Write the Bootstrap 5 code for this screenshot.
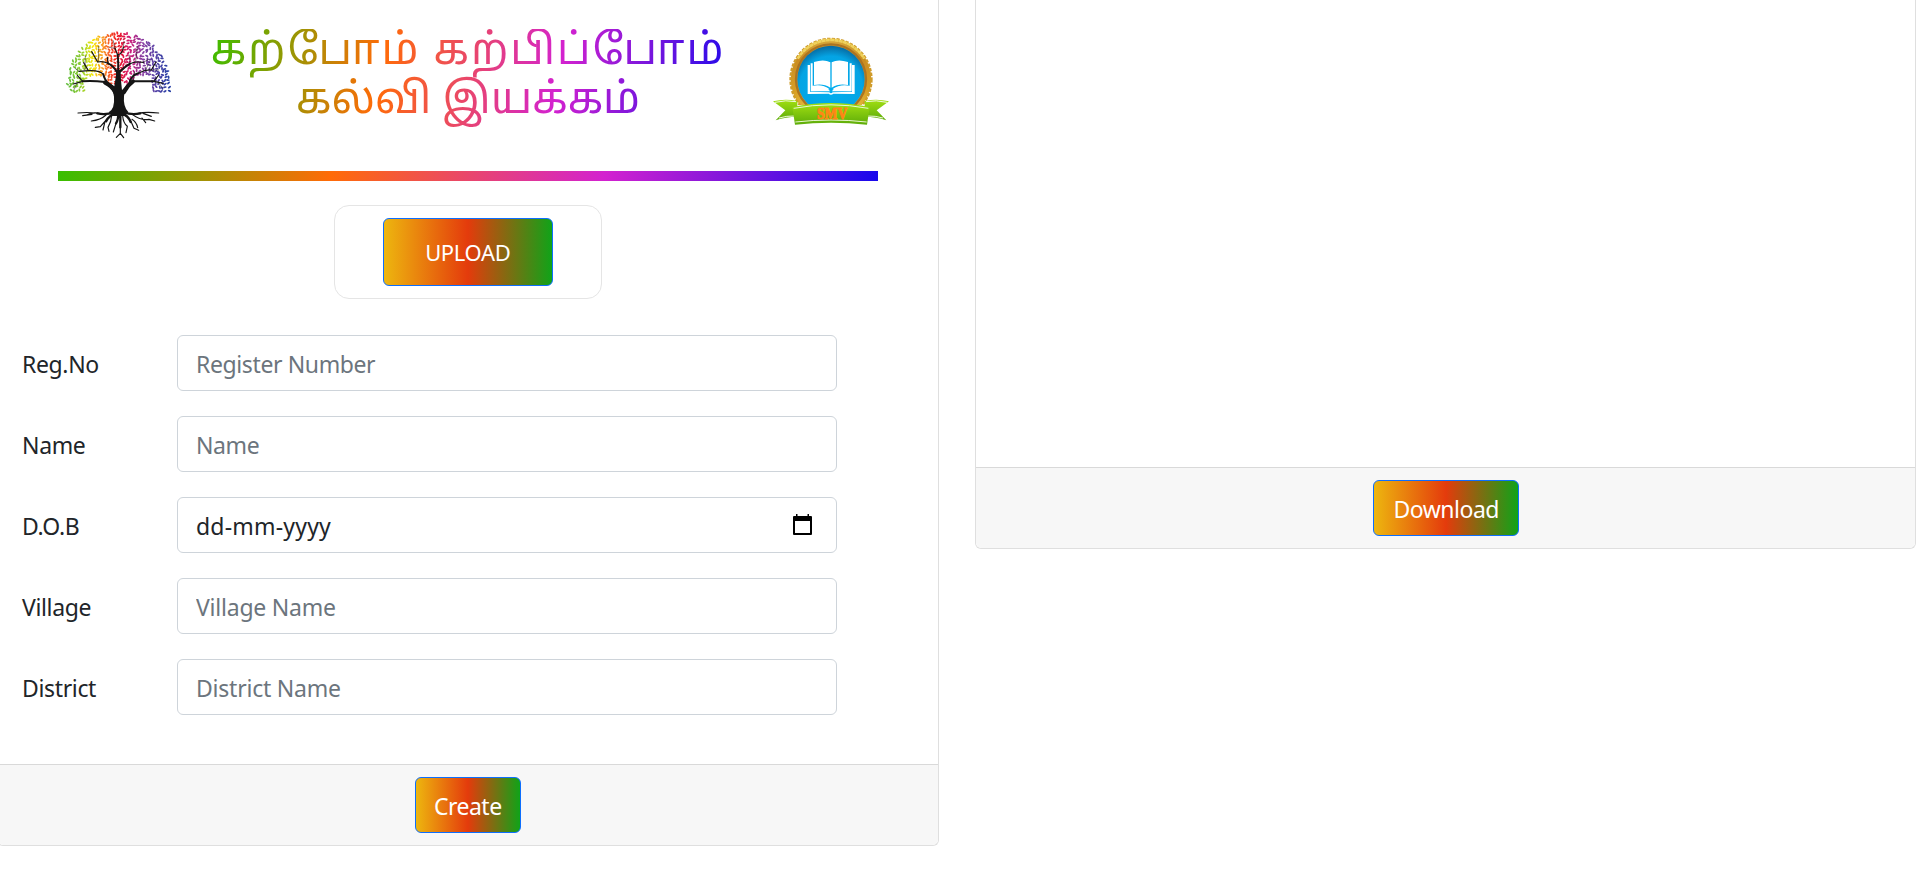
<!DOCTYPE html>
<html lang="en">
<head>
<meta charset="utf-8">
<meta name="viewport" content="width=device-width, initial-scale=1">
<title>ID card</title>
<link href="https://cdn.jsdelivr.net/npm/bootstrap@5.3.0/dist/css/bootstrap.min.css" rel="stylesheet">
<style>
html{font-size:24px}
body{font-family:"Noto Sans","Open Sans",sans-serif;font-size:23px;letter-spacing:-.35px;overflow:hidden;background:#fff;color:#212529}
.page{width:1919px;margin-left:-3px}
.card{border-color:#dfdfdf;border-top:0;border-radius:0 0 6px 6px}
.card-footer{background:#f7f7f7;border-color:#d9d9d9;height:81px;padding:12px 0;border-radius:0 0 6px 6px!important}
.form-card{height:846px}
.view-card{height:549px}
.head{height:171px;padding:20px 0 0 52px}
.tree{width:135px;height:130px}
.emblem{width:124px;height:97px;margin:13px 0 0 32px}
.title{width:540px;margin:9px 0 0 13px;padding:0 7px;font-family:"Noto Sans Tamil","Noto Sans",sans-serif;font-size:43px;line-height:50px;font-weight:400;white-space:nowrap}
.title span{display:block}
.l1{letter-spacing:2px}
.l2{letter-spacing:0;margin-top:-1px}
.rainbow{background:linear-gradient(100deg,#38bf00,#ff6b08 33.3%,#d322cf 66.6%,#1808ec)}
.title .paint{background:linear-gradient(100deg,#38bf00,#ff6b08 33.3%,#d322cf 66.6%,#1808ec);-webkit-background-clip:text;background-clip:text;color:transparent;margin:0 3px;padding-bottom:10px}
.bar{height:10px;width:820px;margin-left:60px}
.upload-box{width:268px;height:94px;margin:24px auto 36px;border:1px solid #e5e5e5;border-radius:15px;padding:12px 0 0 48px}
.btn{font-size:23px;letter-spacing:-.5px;line-height:36px;border:1px solid #0d6efd;border-radius:6px;color:#fff;padding:10px 0 8px;height:56px;background:linear-gradient(90deg,#edb60f,#e43b0c 50%,#10a318)}
.btn-up{width:170px;height:68px;font-size:22px;padding:14px 0;letter-spacing:-.35px}
.btn-create{width:106px}
.btn-down{width:146px;margin-left:2px}
.fields{padding-left:24px;gap:25px}
.fields label{width:155px;padding-top:2px}
.form-control{width:660px;height:56px;font-size:23px;letter-spacing:-.38px;padding:10px 18px 8px;border:1px solid #ced4da;border-radius:6px;color:#212529}
.form-control::placeholder{color:#6c757d;opacity:1}
#dob{letter-spacing:.2px}
#vil,#dis{letter-spacing:-.22px}
.cal{position:absolute;right:24px;top:17px;width:21px;height:22px}
</style>
</head>
<body>
<div class="page">
<div class="row">
<div class="col-6">
<div class="card form-card">
  <div class="flex-grow-1">
    <div class="head d-flex align-items-start">
      <svg class="tree flex-shrink-0" viewBox="0 0 405 390">
        <g id="leaves"></g>
        <g fill="none" stroke="#151515" stroke-linecap="round" stroke-linejoin="round">
          <path stroke-width="12" d="M203 205Q207 180 205 155M222 216Q232 196 249 184M196 218Q187 198 165 188"/>
          <path stroke-width="6" d="M204 165Q206 130 203 105M206 158Q225 140 240 131M202 158Q190 136 174 130M249 184L312 184M165 186Q130 182 98 184M238 192Q242 166 265 160M180 195Q163 180 160 163"/>
          <path stroke-width="3.500" d="M203 105L195 85M203 105Q218 100 220 82M240 131Q252 124 280 127M174 130Q160 123 143 126L125 95M174 130L172 112M265 160Q285 148 304 150L318 126M160 163Q150 150 115 152L101 128M115 152L87 154M312 184L326 165M312 184L340 190M98 184L82 166M98 184L70 192"/>
          <path stroke-width="1.500" d="M195 85L190 62M195 85L178 82M220 82L222 65M145 124L146 78M240 129L237 105M257 125L262 80M280 127L296 118M286 151L299 126M304 150L326 150M105 151L106 108M87 154L75 145M326 188L338 205M80 189L73 208M250 184L254 155"/>
          <path stroke-width="7" d="M192 276Q168 286 142 280M221 276Q244 286 271 280M194 281Q177 287 168 304M218 282Q234 286 242 306M205 280Q205 300 198 310M211 280V322"/>
          <path stroke-width="3.500" d="M150 281Q132 275 110 285M138 279Q110 276 84 279M126 283L98 287M168 285Q152 300 124 303M174 294L151 320L136 322M165 304L159 330M185 286Q184 305 174 322L177 334M198 310L190 336M211 322V340L199 352M211 340L221 353M218 288Q220 310 232 319L228 338M241 300L252 325L266 331M246 298Q260 307 263 323M248 284Q270 302 297 298L314 303M262 281Q285 274 326 279M279 280L304 289M276 294L287 308"/>
        </g>
        <path fill="#151515" d="M193 199Q197 175 200 150H211Q212 175 216 210Q227 201 235 191L246 190Q226 204 222 228Q219 260 235 276L222 288H190L176 277Q195 266 192 230Q190 207 169 193L174 187Q188 195 193 199Z"/>
      </svg>
      <h1 class="title"><span class="paint"><span class="text-center l1">கற்போம் கற்பிப்போம்</span><span class="text-center l2">கல்வி இயக்கம்</span></span></h1>
      <svg class="emblem flex-shrink-0" viewBox="30 40 372 291">
        <defs>
          <linearGradient id="gold" x1="0" y1="0" x2="0" y2="1"><stop offset="0" stop-color="#d9a93a"/><stop offset=".25" stop-color="#c98c22"/><stop offset=".65" stop-color="#d99f25"/><stop offset="1" stop-color="#e8c84d"/></linearGradient>
          <radialGradient id="sky" cx=".5" cy=".62" r=".62"><stop offset="0" stop-color="#00aef0"/><stop offset=".75" stop-color="#04a4e4"/><stop offset="1" stop-color="#08699f"/></radialGradient>
          <linearGradient id="leaf" x1="0" y1="0" x2="0" y2="1"><stop offset="0" stop-color="#a2df12"/><stop offset="1" stop-color="#5dac09"/></linearGradient>
        </defs>
        <circle cx="213" cy="179" r="121" fill="url(#gold)"/>
        <circle cx="213" cy="179" r="121.500" fill="none" stroke="#cf9c2b" stroke-width="7" stroke-dasharray="10 4"/>
        <path d="M113 117A117 117 0 0 1 313 117" fill="none" stroke="#efd25c" stroke-width="8" stroke-dasharray="12 1"/>
        <circle cx="213" cy="179" r="105" fill="none" stroke="#ad7420" stroke-width="7"/>
        <circle cx="213" cy="179" r="101" fill="url(#sky)"/>
        <path d="M110 256H316L300 310H120Z" fill="#fff"/>
        <path fill="#fff" d="M143 136H150V216L208 218Q213 224 218 218L276 216V136H284V223L220 222Q213 228 206 222L143 223Z"/>
        <path fill="#fff" d="M152 131H158V198Q188 192 209 209Q180 203 158 214H152ZM275 131H269V198Q239 192 217 209Q247 203 269 214H275Z"/>
        <path fill="#fff" d="M162 127Q192 117 211 128V204Q190 190 162 196ZM264 127Q234 117 215 128V204Q236 190 264 196Z"/>
        <path fill="#fff" d="M153 215Q164 197 184 200Q204 203 210 215ZM273 215Q262 197 242 200Q222 203 216 215Z"/>
        <path fill="url(#leaf)" d="M39 245Q75 236 112 244V291Q77 291 47 302L76 272ZM387 245Q351 236 314 244V291Q349 291 379 302L350 272Z"/>
        <path d="M45 248Q78 240 108 246M381 248Q348 240 318 246M57 295Q80 288 105 289M369 295Q346 288 321 289" fill="none" stroke="#f0fae0" stroke-width="3"/>
        <path fill="url(#leaf)" d="M97 262Q213 238 329 262L321 315Q213 303 105 315Z"/>
        <path d="M101 266Q213 245 325 266M106 307Q213 295 320 307" fill="none" stroke="#e9f7d3" stroke-width="3"/>
        <text x="171" y="297" textLength="91" lengthAdjust="spacingAndGlyphs" font-family="Liberation Serif, serif" font-weight="700" font-size="48" fill="#ff8617" stroke="#ff8617" stroke-width="3" letter-spacing="0">SMV</text>
      </svg>
    </div>
    <div class="bar rainbow"></div>
    <div class="upload-box"><button class="btn btn-up">UPLOAD</button></div>
    <div class="fields d-flex flex-column">
      <div class="d-flex align-items-center"><label for="reg">Reg.No</label><input id="reg" class="form-control" placeholder="Register Number"></div>
      <div class="d-flex align-items-center"><label for="nm">Name</label><input id="nm" class="form-control" placeholder="Name"></div>
      <div class="d-flex align-items-center"><label for="dob">D.O.B</label>
        <div class="position-relative"><input id="dob" class="form-control" value="dd-mm-yyyy">
          <svg class="cal" viewBox="0 0 21 22"><path d="M2 2H4V0H5.500V2H15.500V0H17V2H19Q20 2 20 3V20Q20 21 19 21H2Q1 21 1 20V3Q1 2 2 2ZM3 7V19H18V7Z" fill="#000" fill-rule="evenodd"/></svg></div>
      </div>
      <div class="d-flex align-items-center"><label for="vil">Village</label><input id="vil" class="form-control" placeholder="Village Name"></div>
      <div class="d-flex align-items-center"><label for="dis">District</label><input id="dis" class="form-control" placeholder="District Name"></div>
    </div>
  </div>
  <div class="card-footer text-center"><button class="btn btn-create">Create</button></div>
</div>
</div>
<div class="col-6">
<div class="card view-card">
  <div class="flex-grow-1"></div>
  <div class="card-footer text-center"><button class="btn btn-down">Download</button></div>
</div>
</div>
</div>
</div>
<script src="https://cdn.jsdelivr.net/npm/bootstrap@5.3.0/dist/js/bootstrap.bundle.min.js"></script>
<script>
// Scatter the leaves over the crown, tinted from green on the left to blue on the right
(function(){
  var stops=[[55,100,190,60],[95,145,205,50],[128,245,235,10],[160,250,150,40],[185,245,65,35],[208,235,20,40],[240,205,30,120],[275,140,60,160],[310,95,65,165],[355,40,65,165]];
  var seed=7,out='';
  function rnd(){seed=(seed*16807)%2147483647;return seed/2147483647}
  function tint(x){
    for(var i=1;i<stops.length;i++)if(x<=stops[i][0]||i==stops.length-1){
      var a=stops[i-1],b=stops[i],t=Math.max(0,Math.min(1,(x-a[0])/(b[0]-a[0])));
      return 'rgb('+[1,2,3].map(function(k){return Math.round(a[k]+(b[k]-a[k])*t)})+')';
    }
  }
  for(var y=40;y<216;y+=9.5)for(var x=52;x<364;x+=9.5){
    var px=x+rnd()*6-3,py=y+rnd()*6-3,dx=px-206,dy=py-192;
    if(dx*dx+dy*dy>154*154)continue;
    var ax=Math.abs(dx),low=ax<45?192:ax<98?170:214;
    if(py>low)continue;
    out+='<ellipse cx="'+px.toFixed(1)+'" cy="'+py.toFixed(1)+'" rx="5.4" ry="2.8" fill="'+tint(px)+'" transform="rotate('+Math.round(rnd()*180)+' '+px.toFixed(1)+' '+py.toFixed(1)+')"/>';
  }
  document.getElementById('leaves').innerHTML=out;
})();
</script>
</body>
</html>
